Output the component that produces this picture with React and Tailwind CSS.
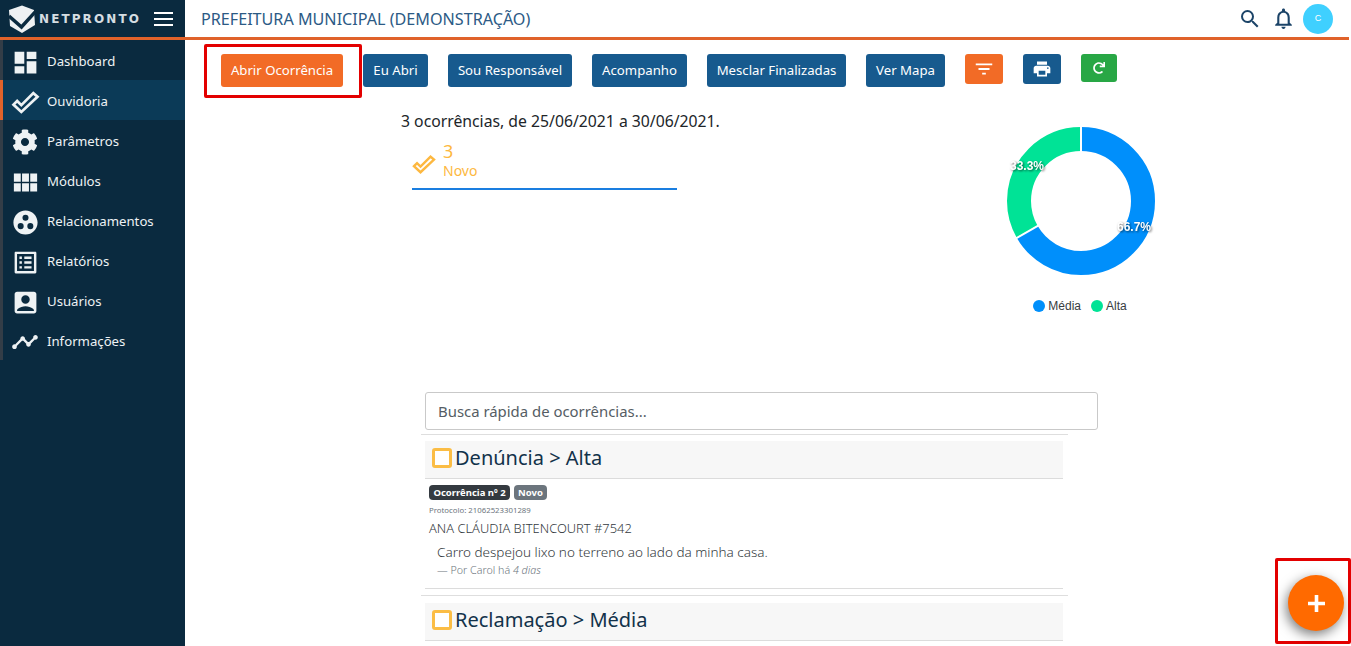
import {
  MdDashboard,
  MdViewModule,
  MdGroupWork,
  MdListAlt,
  MdAccountBox,
  MdTimeline,
  MdSearch,
  MdNotificationsNone,
  MdFilterList,
  MdPrint,
} from "react-icons/md";
import { FaCog, FaRedo } from "react-icons/fa";

const CheckIcon = ({ className = "", weight = 2.6 }) => (
  <svg viewBox="0 0 27 23" className={className} fill="none" stroke="currentColor" strokeWidth={weight} strokeLinejoin="miter">
    <polygon points="2,14 5.5,10.5 9.5,14.5 21,3 25,6.5 9.5,21" />
  </svg>
);

const menu = [
  { label: "Dashboard", icon: <MdDashboard className="w-[29px] h-[29px]" /> },
  { label: "Ouvidoria", icon: <CheckIcon className="w-[29px] h-[24px]" />, active: true },
  { label: "Parâmetros", icon: <FaCog className="w-[26px] h-[26px]" /> },
  { label: "Módulos", icon: <MdViewModule className="w-[31px] h-[31px]" /> },
  { label: "Relacionamentos", icon: <MdGroupWork className="w-[29px] h-[29px]" /> },
  { label: "Relatórios", icon: <MdListAlt className="w-[29px] h-[29px]" /> },
  { label: "Usuários", icon: <MdAccountBox className="w-[29px] h-[29px]" /> },
  { label: "Informações", icon: <MdTimeline className="w-[28px] h-[28px]" /> },
];

const actions = [
  { label: "Eu Abri", width: "w-[65px]" },
  { label: "Sou Responsável", width: "w-[124px]" },
  { label: "Acompanho", width: "w-[95px]" },
  { label: "Mesclar Finalizadas", width: "w-[139px]" },
  { label: "Ver Mapa", width: "w-[79px]" },
];

const Logo = () => (
  <div className="flex items-center pl-[8px]">
    <svg viewBox="0 0 28 28" className="w-[28px] h-[28px] text-[#eef1f3]">
      <path d="M14 0.5 L26 5 L27 20 L14 28 L2 21 L1 5 Z" fill="currentColor" />
      <path d="M1 11 L13.5 22 L29 5" fill="none" stroke="#0a2a3f" strokeWidth="3.4" />
    </svg>
    <span className="ml-[3px] text-[12px] leading-none font-bold tracking-[2.1px] text-[#d5dde2] font-['DejaVu_Sans',sans-serif]">NETPRONTO</span>
  </div>
);

const Header = () => (
  <header className="flex h-[40px] shrink-0 border-b-[3px] border-[#e0622a] bg-white">
    <div className="flex w-[185px] shrink-0 items-center justify-between bg-[#0a2a3f] pr-[12px]">
      <Logo />
      <div className="flex flex-col gap-[4px]">
        <span className="h-[2px] w-[19px] bg-white"></span>
        <span className="h-[2px] w-[19px] bg-white"></span>
        <span className="h-[2px] w-[19px] bg-white"></span>
      </div>
    </div>
    <div className="flex flex-1 items-center justify-between pl-[16px] pr-[16px]">
      <h1 className="pt-[1px] text-[16.15px] leading-none text-[#2c5a85]">PREFEITURA MUNICIPAL (DEMONSTRAÇÃO)</h1>
      <div className="flex items-center text-[#1c4468]">
        <MdSearch className="h-[24px] w-[24px]" />
        <MdNotificationsNone className="ml-[9px] h-[25px] w-[25px]" />
        <div className="ml-[7px] flex h-[30px] w-[30px] items-center justify-center rounded-full bg-[#3fd0ff] text-[9px] text-white font-['Liberation_Sans',sans-serif]">C</div>
      </div>
    </div>
  </header>
);

const Sidebar = () => (
  <aside className="w-[185px] shrink-0 bg-[#0a2a3f]">
    {menu.map((item) => (
      <div
        key={item.label}
        className={`flex h-[40px] items-center border-l-[3px] pt-[4px] text-[13.2px] text-[#eef2f4] ${
          item.active ? "border-[#e0622a] bg-[#0b3a57]" : "border-[#333d47]"
        }`}>
        <span className="flex w-[44px] shrink-0 justify-center">{item.icon}</span>
        {item.label}
      </div>
    ))}
  </aside>
);

const Toolbar = () => (
  <div className="relative flex items-start gap-[20px] pb-[23px] pl-[36px] pt-[14px]">
    <div className="absolute left-[19px] top-[4px] h-[54px] w-[158px] rounded-[2px] border-[3px] border-[#e30000]"></div>
    <button className="h-[33px] w-[122px] rounded-[3px] bg-[#f26b26] text-[13.2px] text-white">Abrir Ocorrência</button>
    {actions.map((action) => (
      <button key={action.label} className={`h-[33px] ${action.width} rounded-[3px] bg-[#175a8e] text-[13.2px] text-white`}>
        {action.label}
      </button>
    ))}
    <button className="flex h-[30px] w-[38px] items-center justify-center rounded-[3px] bg-[#f26b26] text-white">
      <MdFilterList className="h-[22px] w-[22px]" />
    </button>
    <button className="flex h-[30px] w-[38px] items-center justify-center rounded-[3px] bg-[#175a8e] text-white">
      <MdPrint className="h-[20px] w-[20px]" />
    </button>
    <button className="flex h-[28px] w-[36px] items-center justify-center rounded-[3px] bg-[#28a745] text-white">
      <FaRedo className="h-[12px] w-[12px]" />
    </button>
  </div>
);

const Donut = () => {
  // 66.7% azul a partir do topo, sentido horario
  const circ = 2 * Math.PI * 62;
  return (
    <div className="flex w-[150px] flex-col items-center pt-[16px]">
      <svg viewBox="0 0 150 150" className="h-[150px] w-[150px]">
        <g transform="rotate(-90 75 75)" fill="none" strokeWidth="24">
          <circle cx="75" cy="75" r="62" stroke="#008ffb" strokeDasharray={`${circ * 0.667} ${circ}`} />
          <circle cx="75" cy="75" r="62" stroke="#00e396" strokeDasharray={`${circ * 0.333} ${circ}`} strokeDashoffset={-circ * 0.667} />
          <line x1="75" y1="75" x2="150" y2="75" stroke="white" strokeWidth="2" />
          <line x1="50" y1="75" x2="150" y2="75" stroke="white" strokeWidth="2" transform={`rotate(240.1 75 75)`} />
        </g>
        <circle cx="75" cy="75" r="49" fill="white" />
        <g className="font-['Liberation_Sans',sans-serif]" fontSize="12" fontWeight="700" fill="white" textAnchor="middle" style={{ filter: "drop-shadow(1px 1px 1px rgba(0,0,0,0.6))" }}>
          <text x="21" y="44">33.3%</text>
          <text x="128" y="105">66.7%</text>
        </g>
      </svg>
      <div className="mt-[24px] flex -translate-x-[1px] items-center text-[12px] leading-none text-[#373d3f] font-['Liberation_Sans',sans-serif]">
        <span className="mr-[3px] h-[12px] w-[12px] rounded-full bg-[#008ffb]"></span>
        Média
        <span className="ml-[10px] mr-[3px] h-[12px] w-[12px] rounded-full bg-[#00e396]"></span>
        Alta
      </div>
    </div>
  );
};

const Stats = () => (
  <div className="flex pl-[216px]">
    <div className="w-[605px]">
      <p className="text-[15.75px] leading-[22px] text-[#212529]">3 ocorrências, de 25/06/2021 a 30/06/2021.</p>
      <div className="ml-[11px] mt-[8px] flex h-[50px] w-[265px] items-center border-b-2 border-[#1a7ee0] text-[#fdb840]">
        <CheckIcon className="h-[20px] w-[24px]" weight={2.8} />
        <div className="mb-[7px] ml-[7px]">
          <div className="text-[18px] leading-[20px]">3</div>
          <div className="text-[14px] leading-[20px]">Novo</div>
        </div>
      </div>
    </div>
    <Donut />
  </div>
);

const CardHeader = ({ title }) => (
  <div className="ml-[4px] flex h-[38px] w-[638px] items-center border-b border-[#dcdcdc] bg-[#f7f7f7] pl-[7px]">
    <span className="mb-[3px] h-[20px] w-[20px] rounded-[3px] border-[3px] border-[#fbbd45] bg-white"></span>
    <span className="mb-[4px] ml-[3px] text-[20px] leading-none text-[#12324a]">{title}</span>
  </div>
);

const Occurrences = () => (
  <div className="pl-[236px]">
    <div className="ml-[4px] mt-[80px] flex h-[38px] w-[673px] items-center rounded-[3px] border border-[#c9c9c9] px-[12px] text-[14.9px] text-[#555d64]">
      Busca rápida de ocorrências...
    </div>
    <div className="mt-[4px] w-[647px] border-t border-[#dedede] pt-[6px]">
      <CardHeader title="Denúncia > Alta" />
      <div className="ml-[4px] w-[638px] border-b border-[#dcdcdc] pb-[10px] pl-[4px] pt-[6px]">
        <div className="flex gap-[4px]">
          <span className="flex h-[15px] w-[81px] items-center justify-center rounded-[4px] bg-[#343a40] text-[9.5px] font-bold leading-none text-white">Ocorrência nº 2</span>
          <span className="flex h-[15px] w-[33px] items-center justify-center rounded-[4px] bg-[#6c757d] text-[9.5px] font-bold leading-none text-white">Novo</span>
        </div>
        <p className="mt-[5px] text-[7.8px] leading-[10px] text-[#6c757d]">Protocolo: 21062523301289</p>
        <p className="mt-[3px] text-[12.9px] font-light leading-[20px] text-[#343a40]">ANA CLÁUDIA BITENCOURT #7542</p>
        <p className="ml-[8px] mt-[4px] text-[13.5px] font-light leading-[20px] text-[#343a40]">Carro despejou lixo no terreno ao lado da minha casa.</p>
        <p className="ml-[8px] text-[10.7px] font-light leading-[16px] text-[#6c757d]">— Por Carol há <em>4 dias</em></p>
      </div>
      <div className="mt-[6px] border-t border-[#dedede] pt-[7px]">
        <CardHeader title="Reclamação > Média" />
      </div>
    </div>
  </div>
);

export default function App() {
  return (
    <div className="relative flex h-[646px] w-full flex-col overflow-hidden bg-white pr-[2px] font-['Noto_Sans',sans-serif]">
      <Header />
      <div className="flex min-h-0 flex-1">
        <Sidebar />
        <main className="min-w-0 flex-1">
          <Toolbar />
          <Stats />
          <Occurrences />
        </main>
      </div>
      {/* destaque do botao flutuante */}
      <div className="absolute left-[1275px] top-[558px] h-[86px] w-[76px] rounded-[2px] border-[3px] border-[#e30000]"></div>
      <button className="absolute left-[1288px] top-[575px] flex h-[56px] w-[56px] items-center justify-center rounded-full bg-[#ff6a00] text-white shadow-[-2px_4px_12px_rgba(0,0,0,0.5)]">
        <svg viewBox="0 0 17 17" className="h-[17px] w-[17px]" stroke="currentColor" strokeWidth="3.6">
          <path d="M8.5 0v17M0 8.5h17" />
        </svg>
      </button>
    </div>
  );
}
